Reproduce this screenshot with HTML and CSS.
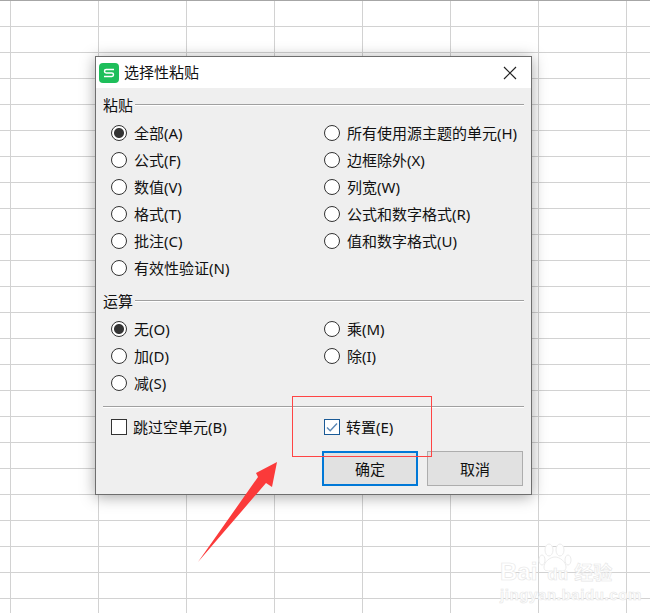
FILE: index.html
```html
<!DOCTYPE html>
<html lang="zh-CN">
<head>
  <meta charset="UTF-8" />
  <title>选择性粘贴</title>
  <link rel="stylesheet" href="styles.css">
</head>
<body>

  <div class="dialog">
    <div class="titlebar">
      <svg class="app-icon" width="20" height="20" viewBox="0 0 20 20">
        <rect width="20" height="20" rx="4" fill="#1dbe5a"/>
        <path d="M15 6.6H7.2a1.7 1.7 0 0 0 0 3.4h5.6a1.7 1.7 0 0 1 0 3.4H5" fill="none" stroke="#fff" stroke-width="1.5"/>
      </svg>
      <span class="title">选择性粘贴</span>
      <svg class="close" width="14" height="14" viewBox="0 0 14 14">
        <path d="M1 1l12 12M13 1L1 13" stroke="#222" stroke-width="1.2" fill="none"/>
      </svg>
    </div>

    <div class="content">
      <div class="group-head"><span>粘贴</span><i></i></div>
      <div class="options paste-options">
        <div class="opt"><b class="radio on"></b>全部(A)</div>
        <div class="opt"><b class="radio"></b>所有使用源主题的单元(H)</div>
        <div class="opt"><b class="radio"></b>公式(F)</div>
        <div class="opt"><b class="radio"></b>边框除外(X)</div>
        <div class="opt"><b class="radio"></b>数值(V)</div>
        <div class="opt"><b class="radio"></b>列宽(W)</div>
        <div class="opt"><b class="radio"></b>格式(T)</div>
        <div class="opt"><b class="radio"></b>公式和数字格式(R)</div>
        <div class="opt"><b class="radio"></b>批注(C)</div>
        <div class="opt"><b class="radio"></b>值和数字格式(U)</div>
        <div class="opt"><b class="radio"></b>有效性验证(N)</div>
      </div>

      <div class="group-head calc-head"><span>运算</span><i></i></div>
      <div class="options">
        <div class="opt"><b class="radio on"></b>无(O)</div>
        <div class="opt"><b class="radio"></b>乘(M)</div>
        <div class="opt"><b class="radio"></b>加(D)</div>
        <div class="opt"><b class="radio"></b>除(I)</div>
        <div class="opt"><b class="radio"></b>减(S)</div>
      </div>

      <div class="divider"></div>

      <div class="checks">
        <div class="check"><b class="box"></b>跳过空单元(B)</div>
        <div class="check check-right">
          <b class="box ticked">
            <svg width="14" height="14" viewBox="0 0 14 14"><path d="M2 7.5l3.2 3.2L12 3.5" fill="none" stroke="#5b87b5" stroke-width="1.4"/></svg>
          </b>转置(E)
        </div>
      </div>

      <div class="buttons">
        <button type="button" class="btn primary">确定</button>
        <button type="button" class="btn">取消</button>
      </div>
    </div>
  </div>

  <!-- annotations on top of the screenshot -->
  <div class="red-box"></div>
  <svg class="arrow" width="100" height="120" viewBox="0 0 100 120">
    <path d="M8 112L68 27 66 23 87 12 82 37 76 33z" fill="#fb3a3a"/>
  </svg>

  <div class="watermark">
    <svg class="paw" width="34" height="28" viewBox="0 0 34 28">
      <g fill="#fff" stroke="#ececec">
        <ellipse cx="11" cy="7" rx="4" ry="6"/>
        <ellipse cx="22" cy="7" rx="4" ry="6"/>
        <ellipse cx="30" cy="17" rx="3" ry="5"/>
        <ellipse cx="4" cy="17" rx="3" ry="5"/>
        <path d="M17 14c-5 0-11 5-11 10s4 4 11 4 11 1 11-4-6-10-11-10z"/>
      </g>
    </svg>
    <div class="wm-top"><span>Bai</span><span class="wm-du">du</span><span class="wm-cn">经验</span></div>
    <div class="wm-url">jingyan.baidu.com</div>
  </div>

</body>
</html>
```

FILE: styles.css
```css
html, body {
  margin: 0;
  height: 613px;
  overflow: hidden;
}
body {
  position: relative;
  padding: 56px 0 0 95px;
  box-sizing: border-box;
  font-family: "Noto Sans", "Noto Sans CJK SC", sans-serif;
  font-size: 15px;
  color: #111;
  background-color: #fff;
  background-image:
    linear-gradient(#a6a6a6, #a6a6a6),
    repeating-linear-gradient(to right, transparent 0, transparent 10px, #d2d2d2 10px, #d2d2d2 11px, transparent 11px, transparent 88px),
    repeating-linear-gradient(to bottom, #d2d2d2 0, #d2d2d2 1px, transparent 1px, transparent 26px);
  background-size: 100% 1px, 100% 100%, 100% 100%;
  background-repeat: no-repeat;
}

.dialog {
  width: 437px;
  height: 439px;
  box-sizing: border-box;
  border: 1px solid #6e6e6e;
  background-color: #efefef;
  box-shadow: 0 2px 14px rgba(0, 0, 0, 0.35);
}

.titlebar {
  display: flex;
  align-items: center;
  height: 31px;
  padding: 0 14px 0 3px;
  background-color: #fff;
}
.app-icon {
  margin-right: 5px;
}
.title {
  flex: 1;
  margin-bottom: 2px;
  line-height: 28px;
}

.content {
  padding: 9px 7px 0 7px;
}

.group-head {
  display: flex;
  align-items: center;
  height: 16px;
  line-height: 16px;
}
.group-head i,
.divider {
  display: block;
  height: 1px;
  background-color: #a0a0a0;
  border-bottom: 1px solid #fff;
}
.group-head i {
  flex: 1;
  margin-left: 2px;
}

.options {
  display: grid;
  grid-template-columns: 213px 1fr;
  grid-auto-rows: 27px;
  padding: 6px 0 0 8px;
}
.paste-options {
  height: 162px;
}
.calc-head {
  margin-top: 12px;
}

.opt,
.check {
  display: flex;
  align-items: center;
  white-space: nowrap;
}

.radio {
  width: 16px;
  height: 16px;
  margin-right: 7px;
  box-sizing: border-box;
  border: 1px solid #333;
  border-radius: 50%;
  background-color: #fff;
}
.radio.on {
  background: radial-gradient(circle, #333 0, #333 4.5px, #fff 5.5px);
}

.divider {
  margin-top: 10px;
}

.checks {
  display: grid;
  grid-template-columns: 213px 1fr;
  height: 27px;
  margin-top: 5px;
  padding-left: 8px;
}
.box {
  display: flex;
  align-items: center;
  justify-content: center;
  width: 16px;
  height: 16px;
  margin-right: 6px;
  box-sizing: border-box;
  border: 1px solid #333;
  background-color: #fff;
}
.box.ticked {
  border-color: #1a5a96;
}

.buttons {
  display: flex;
  justify-content: flex-end;
  gap: 9px;
  margin-top: 11px;
  padding-right: 1px;
}
.btn {
  width: 96px;
  height: 35px;
  padding: 0;
  box-sizing: border-box;
  border: 1px solid #adadad;
  background-color: #e1e1e1;
  color: #111;
  font: inherit;
}
.btn.primary {
  border: 2px solid #0078d7;
}

.red-box {
  position: absolute;
  left: 292px;
  top: 396px;
  width: 140px;
  height: 61px;
  box-sizing: border-box;
  border: 1px solid #f44;
}
.arrow {
  position: absolute;
  left: 190px;
  top: 450px;
}

.watermark {
  position: absolute;
  left: 500px;
  top: 543px;
  width: 150px;
  color: #fff;
  -webkit-text-stroke: 0.6px #e6e6e6;
}
.paw {
  position: absolute;
  left: 38px;
  top: 0;
}
.wm-top {
  position: relative;
  display: flex;
  align-items: baseline;
  margin-top: 16px;
  font-family: "Liberation Sans", sans-serif;
  font-size: 24px;
  font-weight: bold;
  line-height: 26px;
}
.wm-du {
  margin-left: 10px;
  font-size: 17px;
}
.wm-cn {
  margin-left: 6px;
  font-family: "Noto Sans CJK SC", sans-serif;
  font-size: 19px;
}
.wm-url {
  font-family: "Liberation Sans", sans-serif;
  font-size: 15px;
  font-weight: bold;
  line-height: 13px;
  letter-spacing: 0.6px;
}
```
